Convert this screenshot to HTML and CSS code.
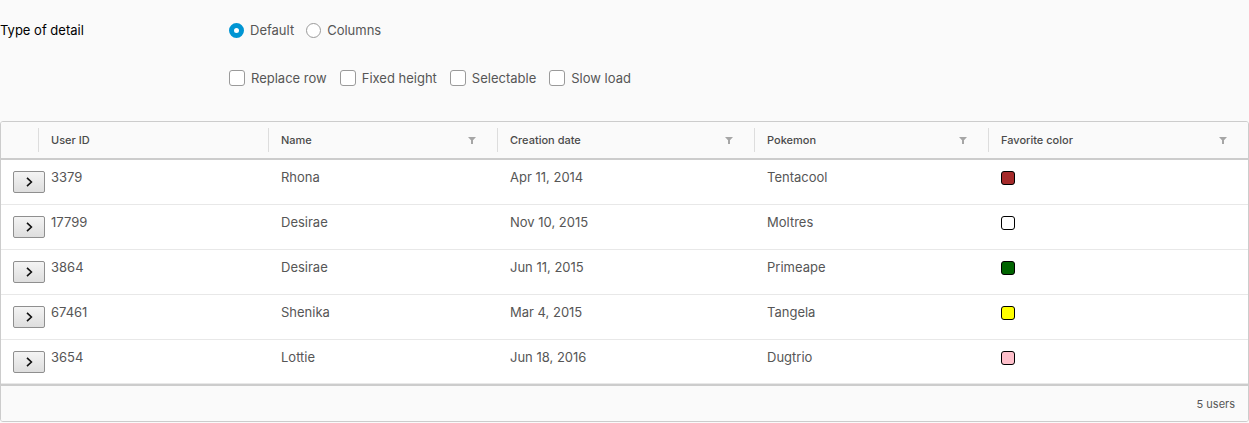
FILE: index.html
```html
<!DOCTYPE html>
<html>
<head>
<meta charset="utf-8">
<link rel="stylesheet" href="styles.css">
</head>
<body>
<div class="form">
  <div class="form-row">
    <div class="form-label">Type of detail</div>
    <div class="controls">
      <label class="opt"><span class="radio checked"></span>Default</label>
      <label class="opt"><span class="radio"></span>Columns</label>
    </div>
  </div>
  <div class="form-row second">
    <div class="form-label"></div>
    <div class="controls wide">
      <label class="opt"><span class="check"></span>Replace row</label>
      <label class="opt"><span class="check"></span>Fixed height</label>
      <label class="opt"><span class="check"></span>Selectable</label>
      <label class="opt"><span class="check"></span>Slow load</label>
    </div>
  </div>
</div>

<div class="grid">
  <div class="thead">
    <div class="th th-expand"></div>
    <div class="th"><span>User ID</span></div>
    <div class="th"><span>Name</span><svg class="filter" viewBox="0 0 8 7"><path d="M0 0H8L5 3.2V7H3V3.2Z"/></svg></div>
    <div class="th"><span>Creation date</span><svg class="filter" viewBox="0 0 8 7"><path d="M0 0H8L5 3.2V7H3V3.2Z"/></svg></div>
    <div class="th"><span>Pokemon</span><svg class="filter" viewBox="0 0 8 7"><path d="M0 0H8L5 3.2V7H3V3.2Z"/></svg></div>
    <div class="th"><span>Favorite color</span><svg class="filter" viewBox="0 0 8 7"><path d="M0 0H8L5 3.2V7H3V3.2Z"/></svg></div>
  </div>
  <div class="tbody">
    <div class="tr">
      <div class="td td-expand"><button class="exp"><svg viewBox="0 0 12 12"><path d="M4 1.8L8.4 6L4 10.2"/></svg></button></div>
      <div class="td">3379</div><div class="td">Rhona</div><div class="td">Apr 11, 2014</div><div class="td">Tentacool</div>
      <div class="td"><span class="swatch sw-brown"></span></div>
    </div>
    <div class="tr">
      <div class="td td-expand"><button class="exp"><svg viewBox="0 0 12 12"><path d="M4 1.8L8.4 6L4 10.2"/></svg></button></div>
      <div class="td">17799</div><div class="td">Desirae</div><div class="td">Nov 10, 2015</div><div class="td">Moltres</div>
      <div class="td"><span class="swatch sw-white"></span></div>
    </div>
    <div class="tr">
      <div class="td td-expand"><button class="exp"><svg viewBox="0 0 12 12"><path d="M4 1.8L8.4 6L4 10.2"/></svg></button></div>
      <div class="td">3864</div><div class="td">Desirae</div><div class="td">Jun 11, 2015</div><div class="td">Primeape</div>
      <div class="td"><span class="swatch sw-green"></span></div>
    </div>
    <div class="tr">
      <div class="td td-expand"><button class="exp"><svg viewBox="0 0 12 12"><path d="M4 1.8L8.4 6L4 10.2"/></svg></button></div>
      <div class="td">67461</div><div class="td">Shenika</div><div class="td">Mar 4, 2015</div><div class="td">Tangela</div>
      <div class="td"><span class="swatch sw-yellow"></span></div>
    </div>
    <div class="tr last">
      <div class="td td-expand"><button class="exp"><svg viewBox="0 0 12 12"><path d="M4 1.8L8.4 6L4 10.2"/></svg></button></div>
      <div class="td">3654</div><div class="td">Lottie</div><div class="td">Jun 18, 2016</div><div class="td">Dugtrio</div>
      <div class="td"><span class="swatch sw-pink"></span></div>
    </div>
  </div>
  <div class="tfoot">5 users</div>
</div>
</body>
</html>
```

FILE: styles.css
```css
* { box-sizing: border-box; }
html, body { margin: 0; padding: 0; }
body {
  background: #fafafa;
  font-family: Inter, "Open Sans", sans-serif;
  color: #565656;
  font-size: 13px;
}
.form { padding-top: 18px; }
.form-row { display: flex; align-items: center; height: 24px; }
.form-row.second { margin-top: 24px; }
.form-label { width: 229px; color: #000; font-size: 13px; }
.controls { display: flex; align-items: center; gap: 12px; }
.controls.wide { gap: 13px; }
.opt { display: flex; align-items: center; gap: 6px; color: #565656; font-size: 13px; }
.radio {
  width: 15px; height: 15px; border-radius: 50%;
  border: 1px solid #9a9a9a; background: #fff; display: inline-block;
}
.radio.checked {
  border: 5px solid #0095d3; background: #fff;
}
.check {
  width: 16px; height: 16px; border-radius: 3px;
  border: 1px solid #9a9a9a; background: #fff; display: inline-block;
}

.grid {
  margin-top: 31px;
  border: 1px solid #ccc;
  border-radius: 3px;
  background: #fff;
  overflow: hidden;
}
.thead, .tr {
  display: grid;
  grid-template-columns: 37px 230px 229px 257px 234px 1fr;
}
.thead {
  background: #fafafa;
  height: 38px;
  border-bottom: 2px solid #ccc;
}
.th {
  display: flex; align-items: center; justify-content: space-between;
  padding: 0 21px 0 13px;
  font-size: 11px; font-weight: 500; color: #4a4a4a;
  position: relative;
}
.th + .th::before {
  content: ""; position: absolute; left: 0; top: 6px; bottom: 6px;
  width: 1px; background: #ddd;
}
.filter { width: 8px; height: 7px; fill: #a6a6a6; }
.tr { height: 45px; border-bottom: 1px solid #e8e8e8; }
.tr.last { height: 44px; border-bottom: 1px solid #e8e8e8; }
.td { padding: 9px 12px 0 13px; line-height: 17px; color: #565656; }
.td-expand { padding: 11px 0 0 12px; overflow: visible; }
.exp {
  width: 32px; height: 22px; padding: 0; margin: 0;
  border: 1px solid #8f8f8f; border-radius: 2px;
  background: linear-gradient(#f4f4f4, #dedede);
  display: flex; align-items: center; justify-content: center;
}
.exp svg { width: 12px; height: 12px; fill: none; stroke: #111; stroke-width: 1.6; }
.td .swatch {
  display: block; width: 14px; height: 14px; margin-top: 2px;
  border: 1px solid #000; border-radius: 3px;
}
.sw-brown { background: #a52a2a; }
.sw-white { background: #fff; }
.sw-green { background: #006400; }
.sw-yellow { background: #ffff00; }
.sw-pink { background: #ffc0cb; }
.tfoot {
  background: #fafafa;
  border-top: 2px solid #ccc;
  height: 37px;
  display: flex; align-items: center; justify-content: flex-end;
  padding-right: 13px;
  font-size: 11px; color: #565656;
}
```
